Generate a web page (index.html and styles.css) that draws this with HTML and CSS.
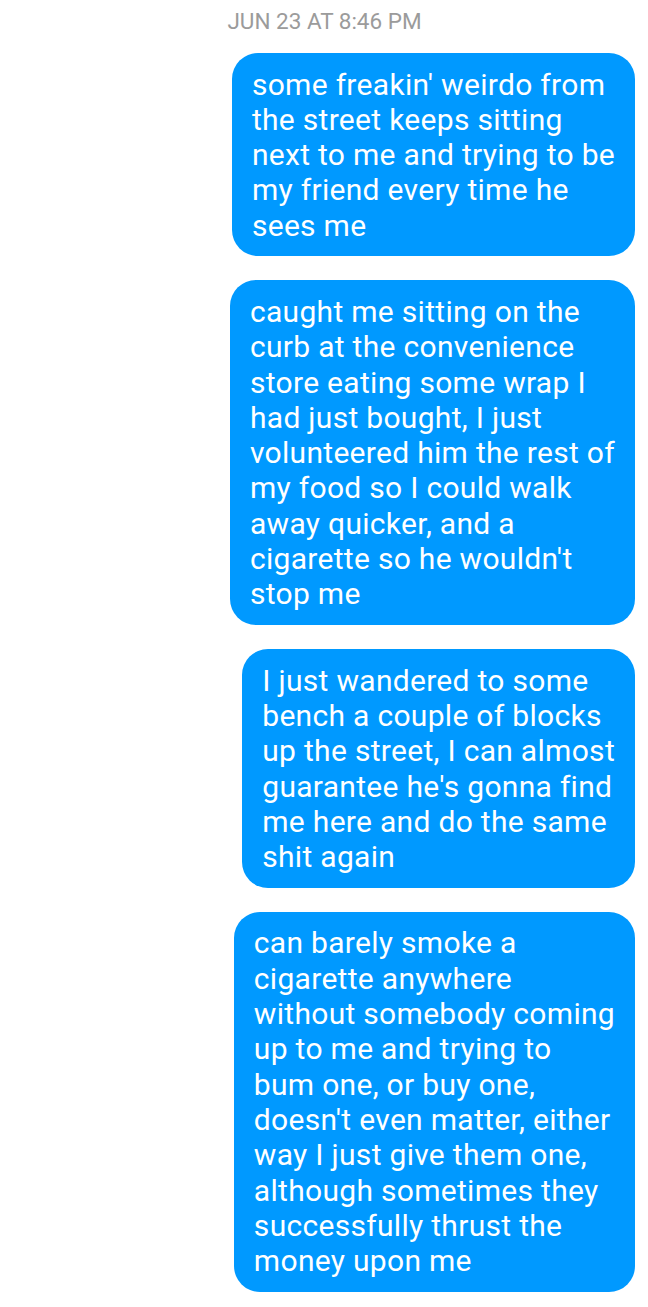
FILE: index.html
```html
<!DOCTYPE html>
<html>
<head>
<meta charset="utf-8">
<link rel="stylesheet" href="styles.css">
</head>
<body>
<div class="thread">
  <div class="stamp">JUN 23 AT 8:46 PM</div>
  <div class="bubble">some freakin' weirdo from<br>the street keeps sitting<br>next to me and trying to be<br>my friend every time he<br>sees me</div>
  <div class="bubble">caught me sitting on the<br>curb at the convenience<br>store eating some wrap I<br>had just bought, I just<br>volunteered him the rest of<br>my food so I could walk<br>away quicker, and a<br>cigarette so he wouldn't<br>stop me</div>
  <div class="bubble">I just wandered to some<br>bench a couple of blocks<br>up the street, I can almost<br>guarantee he's gonna find<br>me here and do the same<br>shit again</div>
  <div class="bubble">can barely smoke a<br>cigarette anywhere<br>without somebody coming<br>up to me and trying to<br>bum one, or buy one,<br>doesn't even matter, either<br>way I just give them one,<br>although sometimes they<br>successfully thrust the<br>money upon me</div>
</div>
</body>
</html>
```
FILE: styles.css
```css
html, body {
  margin: 0;
  padding: 0;
  background: #ffffff;
}
.thread {
  display: flex;
  flex-direction: column;
  align-items: flex-end;
  gap: 24px;
  padding: 0 13px 16px 0;
  font-family: Roboto, "Noto Sans", sans-serif;
}
.stamp {
  align-self: stretch;
  text-align: center;
  color: #9b9b9b;
  font-size: 22.5px;
  line-height: 42px;
  height: 29px;
  padding-left: 14px;
}
.bubble {
  background: #0099ff;
  color: #ffffff;
  font-size: 30px;
  letter-spacing: 0.3px;
  line-height: 35.3px;
  padding: 13.5px 20px 13.5px 20px;
  border-radius: 26px;
  white-space: nowrap;
}
```
